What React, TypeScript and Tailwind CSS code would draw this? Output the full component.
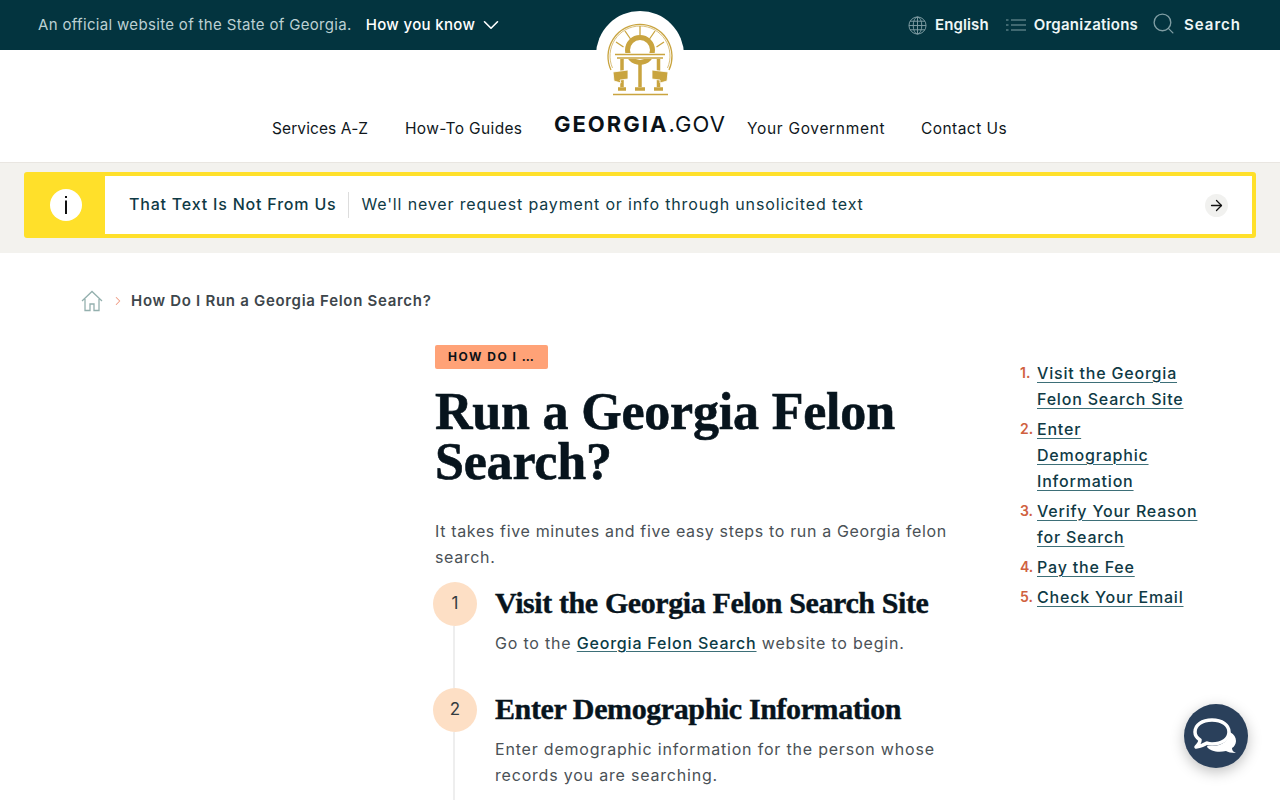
import { ArrowRight, ChevronDown, ChevronRight, Search } from "lucide-react";

const toc = [
  "Visit the Georgia Felon Search Site",
  "Enter\nDemographic Information",
  "Verify Your Reason for Search",
  "Pay the Fee",
  "Check Your Email",
];

function Seal() {
  return (
    <svg viewBox="0 0 100 105" className="h-[105px] w-[100px]" fill="none">
      {/* outer arcs and spokes */}
      <path d="M21 70A32 32 0 1 1 79 70" stroke="#c9a43f" strokeWidth="1.300" />
      <path d="M22.500 68A30 30 0 1 1 77.500 68" stroke="#c9a43f" strokeWidth="0.700" />
      <path d="M50 26V35M35 31L40.500 39M65 31L59.500 39M26 42L33.500 47M74 42L66.500 47" stroke="#c9a43f" strokeWidth="1.300" />
      {/* ring */}
      <circle cx="50" cy="50" r="12.500" stroke="#c9a43f" strokeWidth="5" />
      {/* entablature */}
      <rect x="24" y="53" width="52" height="6" fill="#fff" />
      <path d="M25 54.500H75M27 58H73" stroke="#c9a43f" strokeWidth="1.500" />
      {/* columns */}
      <path d="M32 59V87M68.500 59V87" stroke="#c9a43f" strokeWidth="3.500" />
      <path d="M50 64V87" stroke="#c9a43f" strokeWidth="3.500" />
      {/* banners */}
      <path d="M23 72L38 70V79L30 80L31 83L24 81Z" fill="#c9a43f" stroke="#fff" strokeWidth="0.800" />
      <path d="M62 70L78 72L77 81L70 83L70 80L62 79Z" fill="#c9a43f" stroke="#fff" strokeWidth="0.800" />
      {/* base */}
      <path d="M28 89H36M45 89H55M64 89H73" stroke="#c9a43f" strokeWidth="3.500" />
      <path d="M23 94.500H78" stroke="#c9a43f" strokeWidth="1.300" />
    </svg>
  );
}

function Step({ n, title, children }: { n: number; title: string; children: React.ReactNode }) {
  return (
    <div className="-ml-[2px] flex gap-[18px]">
      <div className="flex w-[44px] shrink-0 flex-col items-center">
        <div className="flex h-[44px] w-[44px] items-center justify-center rounded-full bg-[#fddfc5] text-[17px] text-[#333b40]">
          {n}
        </div>
        <div className="-ml-[2px] w-[2px] flex-1 bg-[#eeeeee]" />
      </div>
      <div className="w-[468px] pb-[32px] pt-[2px]">
        <h2 className="font-['Liberation_Serif',serif] text-[30px] font-bold leading-[38px] tracking-[-0.4px] text-[#07141d] [-webkit-text-stroke:0.4px_#07141d]">
          {title}
        </h2>
        <p className="mt-[8px] text-[16px] leading-[26px] tracking-[0.8px] text-[#4a5156]">{children}</p>
      </div>
    </div>
  );
}

export default function App() {
  return (
    <div className="relative h-[800px] overflow-hidden bg-white font-['Inter',sans-serif]">
      {/* Official bar */}
      <div className="flex h-[50px] items-center justify-between bg-[#03343f] pl-[38px] pr-[39px]">
        <div className="flex items-center text-[15px] tracking-[0.33px]">
          <span className="text-[#bcd0d3]">An official website of the State of Georgia.</span>
          <span className="ml-[14px] font-medium text-white">How you know</span>
          <ChevronDown className="ml-[3px] h-[26px] w-[26px] text-white" strokeWidth={1.500} />
        </div>
        <div className="flex items-center text-[15px] font-semibold text-[#eef6f6]">
          <svg viewBox="0 0 20 20" className="h-[19px] w-[19px]" fill="none" stroke="#7f9da3" strokeWidth="1">
            <circle cx="10" cy="10" r="9" />
            <ellipse cx="10" cy="10" rx="4.500" ry="9" />
            <path d="M10 1V19M1 10H19M2.200 5.500H17.800M2.200 14.500H17.800" />
          </svg>
          <span className="ml-[8px] tracking-[0.1px]">English</span>
          <svg viewBox="0 0 20 14" className="ml-[17px] h-[14px] w-[20px]" fill="none" stroke="#7f9da3" strokeWidth="1">
            <path d="M5 2H20M5 7H20M5 12H20M0 2H2.500M0 7H2.500M0 12H2.500" />
          </svg>
          <span className="ml-[8px] tracking-[0.25px]">Organizations</span>
          <Search className="ml-[13px] h-[25px] w-[25px] -translate-y-[2px] text-[#7f9da3]" strokeWidth={1.300} />
          <span className="ml-[8px] tracking-[1px]">Search</span>
        </div>
      </div>

      {/* Seal overlaps the official bar */}
      <div className="absolute left-[590px] top-0 h-[105px] w-[100px]">
        <div className="absolute left-[6px] top-[11px] h-[88px] w-[88px] rounded-full bg-white" />
        <div className="relative">
          <Seal />
        </div>
      </div>

      {/* Nav */}
      <div className="flex h-[113px] items-start justify-center border-b border-[#e9e6e1] pt-[66px] text-[15.500px] tracking-[0.35px] text-[#10171c]">
        <a className="w-[133px] pt-[1px] tracking-[0.1px]">Services A-Z</a>
        <a className="w-[149px] pt-[1px]">How-To Guides</a>
        <div className="-mt-[8px] w-[193px] text-[22px] font-bold tracking-[2px] text-[#0b1218]">
          GEORGIA<span className="font-normal tracking-[1.2px]">.GOV</span>
        </div>
        <a className="w-[174px] pt-[1px] tracking-[0.68px]">Your Government</a>
        <a className="w-[87px] pt-[1px] tracking-[0.45px]">Contact Us</a>
      </div>

      {/* Alert */}
      <div className="bg-[#f3f2ee] px-[24px] pb-[15px] pt-[9px]">
        <div className="flex h-[66px] overflow-hidden rounded-[3px] border-[4px] border-[#ffe02a] bg-white">
          <div className="flex w-[77px] items-center justify-center bg-[#ffe02a]">
            <div className="-ml-[2px] flex h-[32px] w-[32px] items-center justify-center rounded-full bg-white">
              <svg viewBox="0 0 4 18" className="h-[18px] w-[4px]" fill="#111">
                <rect x="1" y="0" width="2" height="2" />
                <rect x="1" y="4.500" width="2" height="13.500" />
              </svg>
            </div>
          </div>
          <div className="flex flex-1 items-center pl-[24px] pr-[24px] text-[#0f3a45]">
            <span className="pb-[2px] text-[16px] font-medium tracking-[0.8px]">That Text Is Not From Us</span>
            <span className="mx-[12px] h-[26px] w-px bg-[#dddddd]" />
            <span className="pb-[2px] text-[16px] tracking-[0.85px]">We'll never request payment or info through unsolicited text</span>
            <span className="ml-auto flex h-[23px] w-[23px] items-center justify-center rounded-full bg-[#f1f1ef]">
              <ArrowRight className="h-[17px] w-[17px] text-[#111]" strokeWidth={1.800} />
            </span>
          </div>
        </div>
      </div>

      {/* Breadcrumb */}
      <div className="flex items-center pl-[81px] pt-[37px]">
        <svg viewBox="0 0 22 22" className="h-[22px] w-[22px]" fill="none" stroke="#94b0ae" strokeWidth="1.300">
          <path d="M1 11L11 1.500L21 11M4 9V20.500H9V14H13V20.500H18V9" />
        </svg>
        <ChevronRight className="ml-[8px] h-[14px] w-[14px] text-[#ef9b84]" strokeWidth={1.800} />
        <span className="ml-[6px] text-[15px] font-semibold tracking-[0.7px] text-[#3d464b]">How Do I Run a Georgia Felon Search?</span>
      </div>

      {/* Content */}
      <div className="flex pl-[435px] pt-[30px]">
        <main className="w-[530px] shrink-0">
          <span className="inline-block rounded-[2px] bg-[#ffa277] px-[13px] py-[4px] text-[12px] font-bold leading-[16px] tracking-[1.5px] text-[#0b1218]">
            HOW DO I …
          </span>
          <h1 className="mt-[18px] w-[520px] font-['Liberation_Serif',serif] text-[52px] font-bold leading-[50px] tracking-[-0.2px] text-[#07141d] [-webkit-text-stroke:0.6px_#07141d]">
            Run a Georgia Felon Search?
          </h1>
          <p className="mt-[31px] w-[525px] text-[16px] leading-[26px] tracking-[0.65px] text-[#4a5156]">
            It takes five minutes and five easy steps to run a Georgia felon search.
          </p>
          <div className="mt-[12px]">
            <Step n={1} title="Visit the Georgia Felon Search Site">
              Go to the{" "}
              <a className="font-medium text-[#0b3b45] underline decoration-[#3d6f78] decoration-1 underline-offset-2">Georgia Felon Search</a>{" "}
              website to begin.
            </Step>
            <Step n={2} title="Enter Demographic Information">
              Enter demographic information for the person whose records you are searching.
            </Step>
          </div>
        </main>
        <ol className="ml-[55px] w-[182px] pt-[17px] text-[16px] leading-[26px] tracking-[0.8px]">
          {toc.map((label, i) => (
            <li key={label} className="mb-[4px] flex">
              <span className="w-[17px] shrink-0 text-[14px] font-semibold tracking-normal text-[#d0613f]">{i + 1}.</span>
              <a className="w-[165px] whitespace-pre-line font-medium text-[#0f3a45] underline decoration-[#3d6f78] decoration-1 underline-offset-3">
                {label}
              </a>
            </li>
          ))}
        </ol>
      </div>

      {/* Chat launcher */}
      <button className="fixed bottom-[32px] right-[32px] flex h-[64px] w-[64px] items-center justify-center rounded-full bg-[#2a405b] shadow-[0_4px_14px_rgba(0,0,0,0.25)]">
        <svg viewBox="0 0 48 40" className="h-[40px] w-[48px]">
          <path d="M20 14C32 12 44 16 44 25C44 28 42 31 40 32C40 34 41 36 44 37C39 37 36 36 34 35C26 37 18 35 15 31Z" fill="#fff" />
          <ellipse cx="20" cy="16" rx="18" ry="14" fill="#2a405b" />
          <path d="M20 4C10 4 3 9 3 16C3 19 5 22 8 24C8 26 7 28 4 31C9 30 12 29 15 27C17 28 18 28 20 28C30 28 37 23 37 16C37 9 30 4 20 4Z" fill="none" stroke="#fff" strokeWidth="3.500" strokeLinejoin="round" />
        </svg>
      </button>
    </div>
  );
}
